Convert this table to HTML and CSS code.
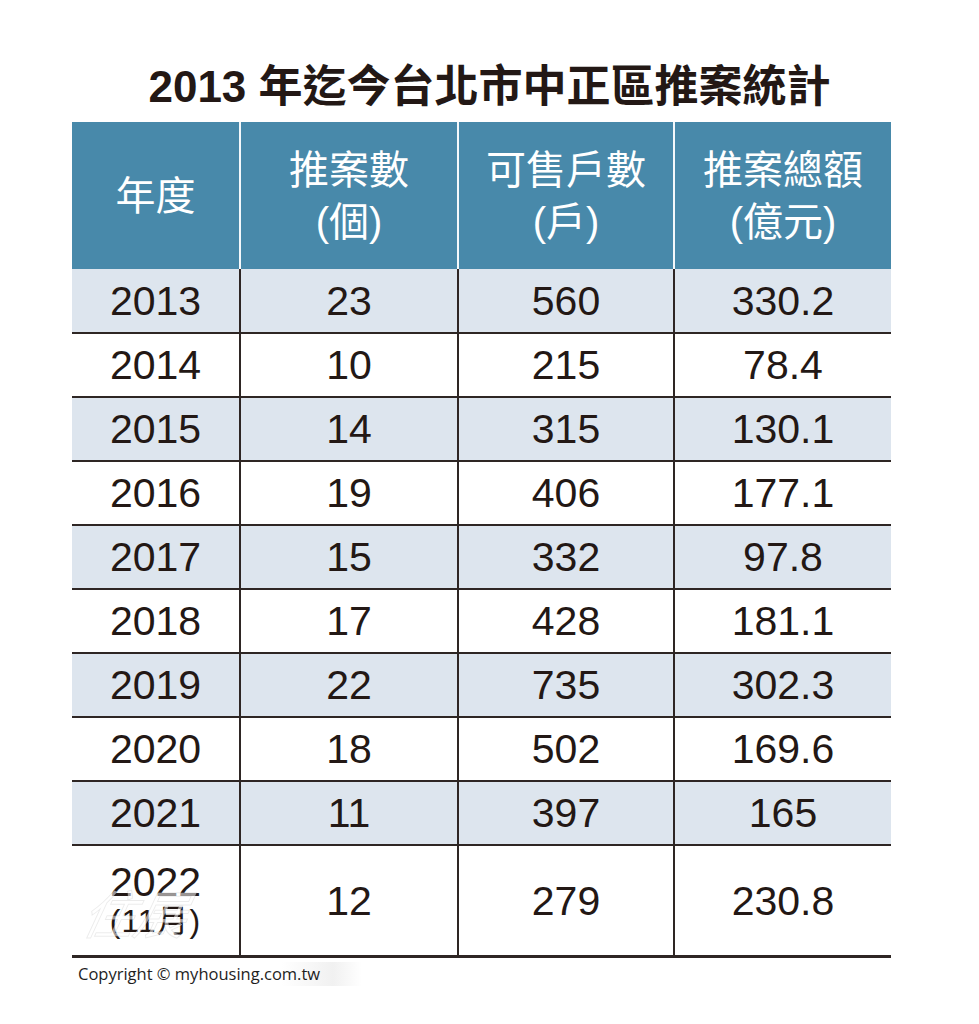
FILE: index.html
```html
<!DOCTYPE html>
<html lang="zh-Hant">
<head>
<meta charset="utf-8">
<title>2013 年迄今台北市中正區推案統計</title>
<link rel="stylesheet" href="styles.css">
</head>
<body>
<div class="page">
  <h1 class="title">2013 年迄今台北市中正區推案統計</h1>
  <div class="table">
    <div class="row head">
      <div class="cell"><span class="hl">年度</span></div>
      <div class="cell"><span class="hl">推案數</span><span class="hl">(個)</span></div>
      <div class="cell"><span class="hl">可售戶數</span><span class="hl">(戶)</span></div>
      <div class="cell"><span class="hl">推案總額</span><span class="hl">(億元)</span></div>
    </div>
    <div class="row shade first"><div class="cell">2013</div><div class="cell">23</div><div class="cell">560</div><div class="cell">330.2</div></div>
    <div class="row"><div class="cell">2014</div><div class="cell">10</div><div class="cell">215</div><div class="cell">78.4</div></div>
    <div class="row shade"><div class="cell">2015</div><div class="cell">14</div><div class="cell">315</div><div class="cell">130.1</div></div>
    <div class="row"><div class="cell">2016</div><div class="cell">19</div><div class="cell">406</div><div class="cell">177.1</div></div>
    <div class="row shade"><div class="cell">2017</div><div class="cell">15</div><div class="cell">332</div><div class="cell">97.8</div></div>
    <div class="row"><div class="cell">2018</div><div class="cell">17</div><div class="cell">428</div><div class="cell">181.1</div></div>
    <div class="row shade"><div class="cell">2019</div><div class="cell">22</div><div class="cell">735</div><div class="cell">302.3</div></div>
    <div class="row"><div class="cell">2020</div><div class="cell">18</div><div class="cell">502</div><div class="cell">169.6</div></div>
    <div class="row shade"><div class="cell">2021</div><div class="cell">11</div><div class="cell">397</div><div class="cell">165</div></div>
    <div class="row last">
      <div class="cell year">
        <span class="yr">2022</span>
        <span class="month">(11月)</span>
        <span class="watermark">住展</span>
      </div>
      <div class="cell">12</div><div class="cell">279</div><div class="cell">230.8</div>
    </div>
  </div>
  <div class="copyright">Copyright © myhousing.com.tw</div>
</div>
</body>
</html>
```
FILE: styles.css
```css
* { box-sizing: border-box; }
html, body { margin: 0; padding: 0; background: #ffffff; }
body { width: 979px; height: 1024px; overflow: hidden; }
.page { padding-top: 62px; }
.title {
  margin: 0;
  height: 60px;
  font-family: "Liberation Sans", "Noto Sans CJK TC", sans-serif;
  font-weight: 700;
  font-size: 44px;
  line-height: 50px;
  color: #231815;
  text-align: center;
}
.table {
  margin-left: 72px;
  width: 819px;
}
.row {
  display: grid;
  grid-template-columns: 167px 218px 216px 218px;
  height: 64px;
  border-bottom: 2px solid #2e2624;
  font-family: "Liberation Sans", "Noto Sans CJK TC", sans-serif;
  font-size: 41px;
  color: #231815;
}
.row.first { height: 65px; }
.row.shade { background: #dde5ee; }
.cell {
  display: flex;
  align-items: center;
  justify-content: center;
  text-align: center;
  padding-top: 1px;
}
.cell + .cell { border-left: 2px solid #2e2624; }
.row.head {
  height: 147px;
  background: #4889aa;
  border-bottom: none;
  font-family: "Liberation Sans", "Noto Sans CJK TC", sans-serif;
  font-size: 40px;
  line-height: 52px;
  color: #ffffff;
}
.row.head .cell {
  padding-top: 0;
  flex-direction: column;
}
.hl { display: block; height: 52px; }
.row.head .cell + .cell { border-left: 2px solid #f4f8fb; }
.row.last {
  height: 112px;
  border-bottom: 3px solid #2e2624;
}
.cell.year {
  position: relative;
  flex-direction: column;
  line-height: 40px;
}
.yr { display: block; }
.month {
  display: block;
  font-size: 32px;
  line-height: 38px;
  letter-spacing: 1px;
}
.watermark {
  position: absolute;
  left: 12px;
  top: 46px;
  font-family: "Noto Sans CJK TC", sans-serif;
  font-size: 52px;
  font-style: italic;
  color: rgba(255, 255, 255, 0.55);
  -webkit-text-stroke: 1px rgba(0, 0, 0, 0.08);
  transform: skewX(-12deg);
  pointer-events: none;
}
.copyright {
  margin: 4px 0 0 72px;
  width: 290px;
  padding: 2px 0 2px 6px;
  font-family: "Open Sans", sans-serif;
  font-size: 16.5px;
  line-height: 20px;
  color: #1e1e1e;
  background: linear-gradient(90deg, #ffffff 0%, #ffffff 72%, #f1f1f1 90%, #ffffff 100%);
}
```
